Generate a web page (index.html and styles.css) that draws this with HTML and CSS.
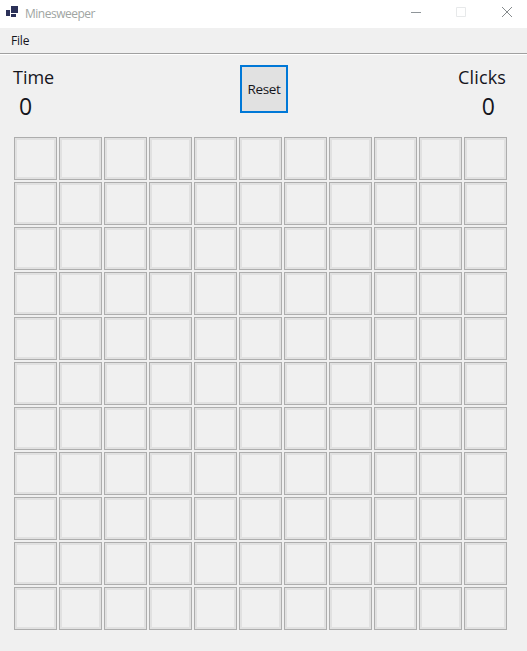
FILE: index.html
```html
<!DOCTYPE html>
<html lang="en">
<head>
<meta charset="utf-8">
<title>Minesweeper</title>
<link rel="stylesheet" href="styles.css">
</head>
<body>
<div class="window">
  <header class="titlebar">
    <svg class="app-icon" width="12" height="11" viewBox="0 0 12 11" shape-rendering="crispEdges"><path fill="#2b3158" d="M0 4h4v6H0zM5 0h7v7H5zM5 8h5v3H5z"/></svg>
    <span class="title">Minesweeper</span>
    <div class="controls">
      <svg width="10" height="10" viewBox="0 0 10 10"><path d="M0 5.5h10" stroke="#8f9599"/></svg>
      <svg width="10" height="10" viewBox="0 0 10 10"><path d="M.5.5h9v9h-9z" fill="none" stroke="#e7e9ea"/></svg>
      <svg width="10" height="10" viewBox="0 0 10 10"><path d="M0 0l10 10M10 0L0 10" stroke="#858a8c"/></svg>
    </div>
  </header>
  <nav class="menubar"><span class="menu-item">File</span></nav>
  <main>
    <section class="status">
      <div class="counter time"><span class="label">Time</span><span class="value">0</span></div>
      <button class="reset" type="button"><span>Reset</span></button>
      <div class="counter clicks"><span class="label">Clicks</span><span class="value">0</span></div>
    </section>
    <section class="board" id="board"></section>
  </main>
</div>
<script src="board.js"></script>
</body>
</html>
```
FILE: styles.css
```css
* { box-sizing: border-box; }
body {
  margin: 0;
  background: #f0f0f0;
  color: #15151c;
  font-family: "Open Sans", "Noto Sans", sans-serif;
}
.window { width: 527px; height: 651px; overflow: hidden; }
.titlebar {
  display: flex;
  height: 28px;
  padding: 0 15px 0 6px;
  background: #fff;
}
.app-icon { display: block; margin-top: 6px; }
.title {
  margin-left: 7px;
  color: #a0a5a2;
  font-size: 12px;
  line-height: 27px;
  letter-spacing: -0.5px;
}
.controls { display: flex; gap: 35px; margin: 7px 0 0 auto; }
.controls svg { display: block; overflow: visible; }
.controls svg:last-child { margin-left: 1px; }
.menubar {
  height: 27px;
  padding-left: 11px;
  border-bottom: 1px solid #fff;
  box-shadow: inset 0 -1px #a0a0a0;
  font-size: 12px;
  line-height: 25px;
  letter-spacing: -0.2px;
}
.status {
  display: grid;
  grid-template-columns: 227px 48px 1fr;
  height: 82px;
  padding: 10px 21px 0 13px;
}
.counter { display: flex; flex-direction: column; margin-top: -1px; }
.label { font-size: 18px; line-height: 26px; }
.value { font-size: 23px; line-height: 32px; }
.time .value { margin-left: 6px; }
.clicks { align-items: flex-end; }
.clicks .label { letter-spacing: 0.15px; }
.clicks .value { margin-right: 11px; }
.reset {
  width: 48px;
  height: 48px;
  padding: 0;
  border: 2px solid #0078d7;
  background: #e1e1e1;
  color: inherit;
  font: 13.5px/44px "Open Sans", "Noto Sans", sans-serif;
  letter-spacing: -0.35px;
}
.board {
  display: grid;
  grid-template-columns: repeat(11, 43px);
  grid-auto-rows: 43px;
  gap: 2px;
  padding-left: 14px;
}
.cell {
  border: 1px solid #adadad;
  box-shadow: inset 0 0 0 2px #e1e1e1;
}
```
FILE: board.js
```js
const board = document.getElementById("board");
for (let i = 0; i < 11 * 11; i++) {
  const cell = document.createElement("div");
  cell.className = "cell";
  board.append(cell);
}
```
